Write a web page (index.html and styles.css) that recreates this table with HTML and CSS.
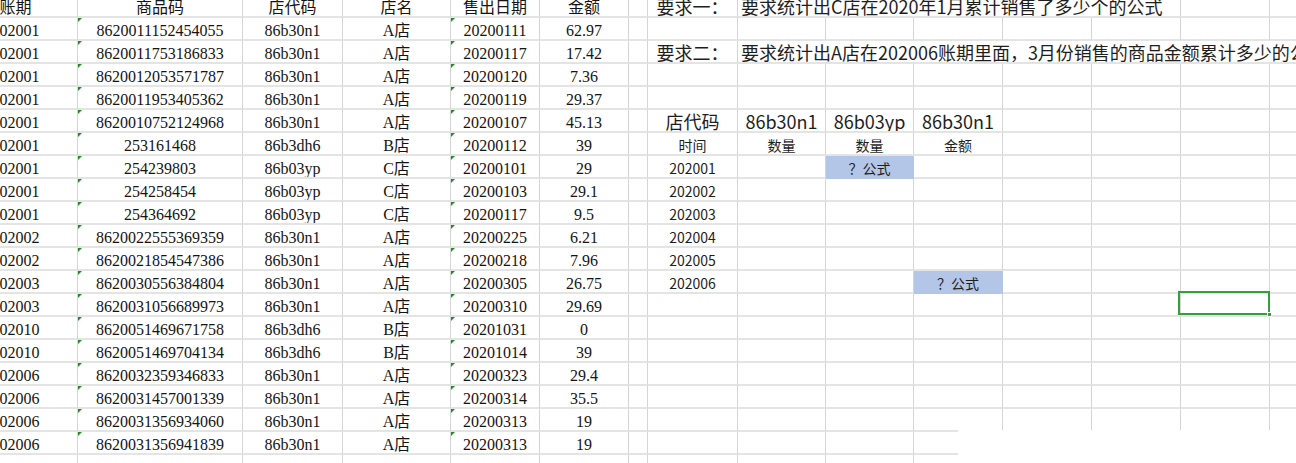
FILE: index.html
```html
<!DOCTYPE html>
<html lang="zh-CN">
<head>
<meta charset="utf-8">
<title>Sheet</title>
<link rel="stylesheet" href="styles.css">
</head>
<body>
<div class="sheet">
<table class="grid">
<colgroup>
<col class="w120"><col class="w165"><col class="w100"><col class="w108"><col class="w89"><col class="w89"><col class="w19"><col class="w90"><col class="w88"><col class="w88"><col class="w89"><col class="w89"><col class="w89"><col class="w89"><col class="w100">
</colgroup>
<tbody>
<tr><td class="pa">账期</td><td>商品码</td><td>店代码</td><td>店名</td><td>售出日期</td><td>金额</td><td></td><td class="big">要求一：</td><td class="note" colspan="5">要求统计出C店在2020年1月累计销售了多少个的公式</td><td></td><td></td></tr>
<tr><td class="pa">202001</td><td class="tx">8620011152454055</td><td>86b30n1</td><td>A店</td><td class="tx">20200111</td><td>62.97</td><td></td><td></td><td></td><td></td><td></td><td></td><td></td><td></td><td></td></tr>
<tr><td class="pa">202001</td><td class="tx">8620011753186833</td><td>86b30n1</td><td>A店</td><td class="tx">20200117</td><td>17.42</td><td></td><td class="big">要求二：</td><td class="note" colspan="7">要求统计出A店在202006账期里面，3月份销售的商品金额累计多少的公式</td></tr>
<tr><td class="pa">202001</td><td class="tx">8620012053571787</td><td>86b30n1</td><td>A店</td><td class="tx">20200120</td><td>7.36</td><td></td><td></td><td></td><td></td><td></td><td></td><td></td><td></td><td></td></tr>
<tr><td class="pa">202001</td><td class="tx">8620011953405362</td><td>86b30n1</td><td>A店</td><td class="tx">20200119</td><td>29.37</td><td></td><td></td><td></td><td></td><td></td><td></td><td></td><td></td><td></td></tr>
<tr><td class="pa">202001</td><td class="tx">8620010752124968</td><td>86b30n1</td><td>A店</td><td class="tx">20200107</td><td>45.13</td><td></td><td class="big">店代码</td><td class="big">86b30n1</td><td class="big">86b03yp</td><td class="big">86b30n1</td><td></td><td></td><td></td><td></td></tr>
<tr><td class="pa">202001</td><td class="tx">253161468</td><td>86b3dh6</td><td>B店</td><td class="tx">20200112</td><td>39</td><td></td><td class="sans">时间</td><td class="sans">数量</td><td class="sans">数量</td><td class="sans">金额</td><td></td><td></td><td></td><td></td></tr>
<tr><td class="pa">202001</td><td class="tx">254239803</td><td>86b03yp</td><td>C店</td><td class="tx">20200101</td><td>29</td><td></td><td class="sans">202001</td><td></td><td class="sans blue">？公式</td><td></td><td></td><td></td><td></td><td></td></tr>
<tr><td class="pa">202001</td><td class="tx">254258454</td><td>86b03yp</td><td>C店</td><td class="tx">20200103</td><td>29.1</td><td></td><td class="sans">202002</td><td></td><td></td><td></td><td></td><td></td><td></td><td></td></tr>
<tr><td class="pa">202001</td><td class="tx">254364692</td><td>86b03yp</td><td>C店</td><td class="tx">20200117</td><td>9.5</td><td></td><td class="sans">202003</td><td></td><td></td><td></td><td></td><td></td><td></td><td></td></tr>
<tr><td class="pa">202002</td><td class="tx">8620022555369359</td><td>86b30n1</td><td>A店</td><td class="tx">20200225</td><td>6.21</td><td></td><td class="sans">202004</td><td></td><td></td><td></td><td></td><td></td><td></td><td></td></tr>
<tr><td class="pa">202002</td><td class="tx">8620021854547386</td><td>86b30n1</td><td>A店</td><td class="tx">20200218</td><td>7.96</td><td></td><td class="sans">202005</td><td></td><td></td><td></td><td></td><td></td><td></td><td></td></tr>
<tr><td class="pa">202003</td><td class="tx">8620030556384804</td><td>86b30n1</td><td>A店</td><td class="tx">20200305</td><td>26.75</td><td></td><td class="sans">202006</td><td></td><td></td><td class="sans blue">？公式</td><td></td><td></td><td></td><td></td></tr>
<tr><td class="pa">202003</td><td class="tx">8620031056689973</td><td>86b30n1</td><td>A店</td><td class="tx">20200310</td><td>29.69</td><td></td><td></td><td></td><td></td><td></td><td></td><td></td><td class="sel"></td><td></td></tr>
<tr><td class="pa">202010</td><td class="tx">8620051469671758</td><td>86b3dh6</td><td>B店</td><td class="tx">20201031</td><td>0</td><td></td><td></td><td></td><td></td><td></td><td></td><td></td><td></td><td></td></tr>
<tr><td class="pa">202010</td><td class="tx">8620051469704134</td><td>86b3dh6</td><td>B店</td><td class="tx">20201014</td><td>39</td><td></td><td></td><td></td><td></td><td></td><td></td><td></td><td></td><td></td></tr>
<tr><td class="pa">202006</td><td class="tx">8620032359346833</td><td>86b30n1</td><td>A店</td><td class="tx">20200323</td><td>29.4</td><td></td><td></td><td></td><td></td><td></td><td></td><td></td><td></td><td></td></tr>
<tr><td class="pa">202006</td><td class="tx">8620031457001339</td><td>86b30n1</td><td>A店</td><td class="tx">20200314</td><td>35.5</td><td></td><td></td><td></td><td></td><td></td><td></td><td></td><td></td><td></td></tr>
<tr><td class="pa">202006</td><td class="tx">8620031356934060</td><td>86b30n1</td><td>A店</td><td class="tx">20200313</td><td>19</td><td></td><td></td><td></td><td></td><td></td><td></td><td></td><td></td><td></td></tr>
<tr><td class="pa">202006</td><td class="tx">8620031356941839</td><td>86b30n1</td><td>A店</td><td class="tx">20200313</td><td>19</td><td></td><td></td><td></td><td></td><td></td><td></td><td></td><td></td><td></td></tr>
<tr><td></td><td></td><td></td><td></td><td></td><td></td><td></td><td></td><td></td><td></td><td></td><td></td><td></td><td></td><td></td></tr>
</tbody>
</table>
<div class="cover"></div>
</div>
</body>
</html>
```

FILE: styles.css
```css
html, body {
  margin: 0;
  padding: 0;
  background: #ffffff;
}

.sheet {
  position: relative;
  width: 1296px;
  height: 463px;
  overflow: hidden;
  background: #ffffff;
}

.grid {
  border-collapse: separate;
  border-spacing: 0;
  table-layout: fixed;
  width: 1412px;
  margin: -5px 0 0 -42px;
  font-family: "Liberation Serif", "Noto Sans CJK SC", serif;
  font-size: 16px;
  color: #141414;
}

.w120 { width: 120px; }
.w165 { width: 165px; }
.w108 { width: 108px; }
.w100 { width: 100px; }
.w90 { width: 90px; }
.w89 { width: 89px; }
.w88 { width: 88px; }
.w19 { width: 19px; }

.grid tr {
  height: 23px;
}

.grid td {
  padding: 0;
  border-right: 1px solid #d5d5d5;
  border-bottom: 2px solid #e4e4e4;
  vertical-align: bottom;
  line-height: 16px;
  text-align: center;
  white-space: nowrap;
  overflow: hidden;
  position: relative;
}

.grid td.pa {
  padding-right: 4px;
}

.grid td.tx::before {
  content: "";
  position: absolute;
  top: 0;
  left: 0;
  border-top: 4px solid #1f8f24;
  border-right: 4px solid transparent;
}

.grid td.sans {
  font-family: "Noto Sans CJK SC", "Noto Sans", sans-serif;
  font-size: 14px;
  padding-bottom: 1px;
  color: #1e1e1e;
}

.grid td.big {
  font-family: "Noto Sans CJK SC", "Noto Sans", sans-serif;
  font-size: 18px;
  padding-bottom: 2px;
  color: #1e1e1e;
}

.grid td.note {
  font-family: "Noto Sans CJK SC", "Noto Sans", sans-serif;
  font-size: 18px;
  padding-bottom: 2px;
  padding-left: 3px;
  text-align: left;
  color: #1e1e1e;
}

.grid td.blue {
  background: #b4c6e7;
  border-color: #b4c6e7;
}

.grid td.sel {
  overflow: visible;
}

.grid td.sel::after {
  content: "";
  position: absolute;
  top: -3px;
  left: -3px;
  right: -1px;
  bottom: 0;
  border: 2px solid #35a03a;
}

.grid td.sel::before {
  content: "";
  position: absolute;
  right: -3px;
  bottom: -2px;
  width: 5px;
  height: 5px;
  background: #35a03a;
  border: 1px solid #ffffff;
  box-sizing: border-box;
  z-index: 1;
}

.cover {
  position: absolute;
  left: 958px;
  top: 430px;
  width: 338px;
  height: 33px;
  background: #ffffff;
}
```
